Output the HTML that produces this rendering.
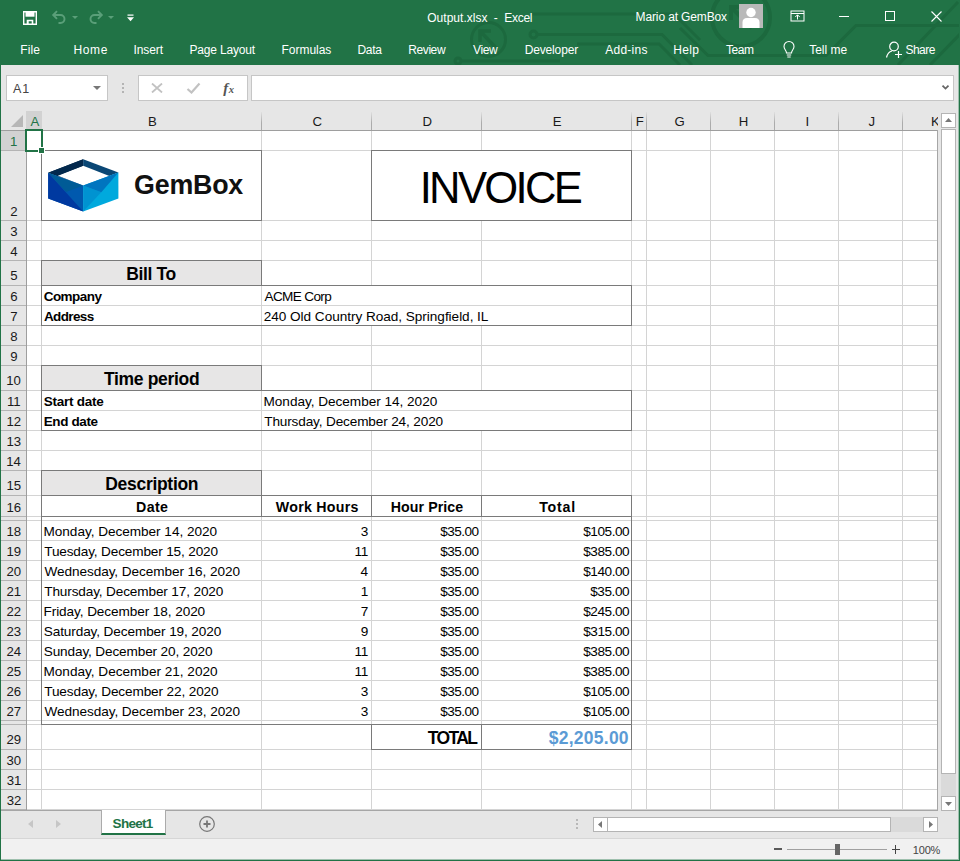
<!DOCTYPE html>
<html><head><meta charset="utf-8"><title>Output.xlsx - Excel</title>
<style>
html,body{margin:0;padding:0}
body{width:960px;height:861px;position:relative;overflow:hidden;background:#e6e6e6;font-family:"Liberation Sans", sans-serif;color:#000}
div,span,svg{position:absolute;box-sizing:border-box}
.t{white-space:nowrap;line-height:1}
.hl{background:#d4d4d4;height:1px}
.vl{background:#d4d4d4;width:1px}
</style></head><body>

<div style="left:0px;top:0px;width:960px;height:65px;background:#217346;"></div>
<svg style="left:0;top:0" width="960" height="65" viewBox="0 0 960 65" fill="none" stroke="#1c693e" stroke-width="3">
<circle cx="488.5" cy="39.5" r="17"/><path d="M497 49 L480 31 M480 42 V31 H491" stroke-width="3.5"/>
<circle cx="533.5" cy="34.5" r="3.5"/><path d="M537 34.5 H662 L692 65"/>
<circle cx="458" cy="61" r="3"/><path d="M461 61 H560"/>
<path d="M532 14 H674 L700 40"/>
<path d="M577 44 H659 L680 65"/>
<circle cx="741" cy="17.5" r="29" stroke-width="4"/><path d="M752 28 L731 7 M731 20 V7 H744" stroke-width="4"/>
<path d="M680 28 L708 55.5 H826 L856 25.5 H960"/>
<path d="M898 65 L958 2"/>
<path d="M930 65 L960 34"/>
</svg>
<svg style="left:22px;top:10px" width="16" height="16" viewBox="0 0 16 16"><path d="M1.7 1.7 H14.3 V14.3 H1.7 Z" fill="none" stroke="#fff" stroke-width="1.4"/><rect x="3.5" y="1.5" width="9" height="5.2" fill="#fff"/><path d="M4.7 9.7 H11.3 V15 H9.7 V11.3 H6.7 V15 H4.7 Z" fill="#fff"/></svg>
<svg style="left:51px;top:10px" width="17" height="15" viewBox="0 0 17 15" fill="none" stroke="#5a9f79" stroke-width="1.9"><path d="M2 5 H9.5 A4 4 0 0 1 9.5 13 H7.500"/><path d="M6 1.200 L2.200 5 L6 8.800"/></svg>
<svg style="left:72px;top:16px" width="6" height="3" viewBox="0 0 6 3"><path d="M0 0 H6 L3 3 Z" fill="#5a9f79"/></svg>
<svg style="left:87px;top:10px" width="17" height="15" viewBox="0 0 17 15" fill="none" stroke="#5a9f79" stroke-width="1.9"><path d="M15 5 H7.500 A4 4 0 0 0 7.500 13 H9.500"/><path d="M11 1.200 L14.800 5 L11 8.800"/></svg>
<svg style="left:108px;top:16px" width="6" height="3" viewBox="0 0 6 3"><path d="M0 0 H6 L3 3 Z" fill="#5a9f79"/></svg>
<svg style="left:127px;top:14px" width="7" height="8" viewBox="0 0 7 8"><rect x="0.500" y="0.500" width="6" height="1.200" fill="#fff"/><path d="M0 3.300 H7 L3.500 7.300 Z" fill="#fff"/></svg>
<span class="t" style="left:427.20px;top:11.70px;font-size:12px;letter-spacing:0.035px;color:#fff;">Output.xlsx</span>
<span class="t" style="left:493.80px;top:11.70px;font-size:12px;color:#fff;">-</span>
<span class="t" style="left:504.30px;top:11.70px;font-size:12px;letter-spacing:-0.275px;color:#fff;">Excel</span>
<span class="t" style="left:635.60px;top:11.00px;font-size:12px;letter-spacing:-0.132px;color:#fff;">Mario at GemBox</span>
<svg style="left:739px;top:4px" width="24" height="24" viewBox="0 0 24 24"><rect width="24" height="24" fill="#b9b9b9"/><circle cx="12" cy="8.500" r="4.700" fill="#fff"/><path d="M3.500 24 V18.500 Q3.500 14 8 14 H16 Q20.500 14 20.500 18.500 V24 Z" fill="#fff"/></svg>
<svg style="left:790px;top:10px" width="15" height="12" viewBox="0 0 15 12" fill="none" stroke="#fff" stroke-width="1"><rect x="1" y="1" width="13" height="10"/><path d="M1 3.500 H14" /><path d="M7.500 9.500 V5 M5.300 7 L7.500 4.800 L9.700 7"/></svg>
<div style="left:839px;top:16px;width:10px;height:1px;background:#fff;"></div>
<div style="left:885px;top:11px;width:10px;height:10px;border:1px solid #fff"></div>
<svg style="left:931px;top:11px" width="11" height="11" viewBox="0 0 11 11" stroke="#fff" stroke-width="1.100"><path d="M0.500 0.500 L10.500 10.500 M10.500 0.500 L0.500 10.500"/></svg>
<span class="t" style="left:20.30px;top:43.70px;font-size:12px;letter-spacing:0.067px;color:#fff;">File</span>
<span class="t" style="left:73.50px;top:43.70px;font-size:12px;letter-spacing:0.600px;color:#fff;">Home</span>
<span class="t" style="left:133.50px;top:43.70px;font-size:12px;letter-spacing:-0.100px;color:#fff;">Insert</span>
<span class="t" style="left:189.50px;top:43.70px;font-size:12px;letter-spacing:-0.175px;color:#fff;">Page Layout</span>
<span class="t" style="left:281.50px;top:43.70px;font-size:12px;letter-spacing:-0.029px;color:#fff;">Formulas</span>
<span class="t" style="left:357.50px;top:43.70px;font-size:12px;letter-spacing:-0.333px;color:#fff;">Data</span>
<span class="t" style="left:408.30px;top:43.70px;font-size:12px;letter-spacing:-0.420px;color:#fff;">Review</span>
<span class="t" style="left:473.00px;top:43.70px;font-size:12px;letter-spacing:-0.350px;color:#fff;">View</span>
<span class="t" style="left:524.70px;top:43.70px;font-size:12px;letter-spacing:-0.150px;color:#fff;">Developer</span>
<span class="t" style="left:605.30px;top:43.70px;font-size:12px;letter-spacing:0.242px;color:#fff;">Add-ins</span>
<span class="t" style="left:673.20px;top:43.70px;font-size:12px;letter-spacing:0.383px;color:#fff;">Help</span>
<span class="t" style="left:725.95px;top:43.70px;font-size:12px;letter-spacing:-0.400px;color:#fff;">Team</span>
<span class="t" style="left:809.15px;top:43.70px;font-size:12px;letter-spacing:-0.008px;color:#fff;">Tell me</span>
<span class="t" style="left:905.50px;top:43.70px;font-size:12px;letter-spacing:-0.550px;color:#fff;">Share</span>
<svg style="left:782px;top:40px" width="14" height="19" viewBox="0 0 14 19" fill="none" stroke="#fff" stroke-width="1.100"><path d="M4.500 13 C4.500 10.500 2 9.500 2 6.500 A5 5 0 0 1 12 6.500 C12 9.500 9.500 10.500 9.500 13 Z"/><path d="M4.800 15 H9.200 M5.300 17 H8.700"/></svg>
<svg style="left:885px;top:40px" width="19" height="19" viewBox="0 0 19 19" fill="none" stroke="#fff" stroke-width="1.200"><circle cx="9" cy="6.500" r="4.300"/><path d="M1.500 17.500 C2.500 13 5 11.500 7 11"/><path d="M10 14.500 H17 M13.500 11 V18"/></svg>
<div style="left:6px;top:75px;width:102px;height:26px;background:#fff;border:1px solid #c6c6c6"></div>
<span class="t" style="left:13.10px;top:82.70px;font-size:12.5px;letter-spacing:0.750px;color:#444;">A1</span>
<svg style="left:93px;top:86px" width="8" height="4" viewBox="0 0 8 4"><path d="M0 0 H8 L4 4 Z" fill="#777"/></svg>
<div style="left:122px;top:83px;width:2px;height:2px;background:#b4b4b4;"></div>
<div style="left:122px;top:87px;width:2px;height:2px;background:#b4b4b4;"></div>
<div style="left:122px;top:91px;width:2px;height:2px;background:#b4b4b4;"></div>
<div style="left:138px;top:75px;width:110px;height:26px;background:#fff;border:1px solid #c6c6c6"></div>
<svg style="left:151px;top:83px" width="12" height="10" viewBox="0 0 12 10" stroke="#c2c2c2" stroke-width="1.800"><path d="M1 0.500 L11 9.500 M11 0.500 L1 9.500"/></svg>
<svg style="left:186px;top:82px" width="15" height="12" viewBox="0 0 15 12" stroke="#c2c2c2" stroke-width="2.200" fill="none"><path d="M1.500 7 L5.500 10.500 L13.500 1.500"/></svg>
<span class="t" style="left:223.30px;top:80.50px;font-size:15px;font-weight:bold;font-style:italic;color:#555;font-family:'Liberation Serif', serif;">f</span>
<span class="t" style="left:228.75px;top:85.00px;font-size:10.5px;font-weight:bold;font-style:italic;color:#555;font-family:'Liberation Serif', serif;">x</span>
<div style="left:251px;top:75px;width:703px;height:26px;background:#fff;border:1px solid #c6c6c6"></div>
<svg style="left:941px;top:84px" width="9" height="7" viewBox="0 0 9 7" fill="none" stroke="#666" stroke-width="1.800"><path d="M1.500 1.600 L4.500 4.600 L7.500 1.600"/></svg>
<div style="left:27px;top:131px;width:910px;height:679px;background:#fff;"></div>
<div style="left:26px;top:111px;width:16px;height:19px;background:#d2d2d2;"></div>
<svg style="left:11px;top:115px" width="12" height="12" viewBox="0 0 12 12"><path d="M12 0 V12 H0 Z" fill="#b7b7b7"/></svg>
<span class="t" style="left:30.52px;top:115.00px;font-size:13.2px;color:#217346;">A</span>
<span class="t" style="left:147.90px;top:115.00px;font-size:13.2px;color:#1a1a1a;">B</span>
<span class="t" style="left:312.52px;top:115.00px;font-size:13.2px;color:#1a1a1a;">C</span>
<span class="t" style="left:422.40px;top:115.00px;font-size:13.2px;color:#1a1a1a;">D</span>
<span class="t" style="left:552.77px;top:115.00px;font-size:13.2px;color:#1a1a1a;">E</span>
<span class="t" style="left:635.65px;top:115.00px;font-size:13.2px;color:#1a1a1a;">F</span>
<span class="t" style="left:674.40px;top:115.00px;font-size:13.2px;color:#1a1a1a;">G</span>
<span class="t" style="left:738.65px;top:115.00px;font-size:13.2px;color:#1a1a1a;">H</span>
<span class="t" style="left:805.52px;top:115.00px;font-size:13.2px;color:#1a1a1a;">I</span>
<span class="t" style="left:868.40px;top:115.00px;font-size:13.2px;color:#1a1a1a;">J</span>
<span class="t" style="left:930.90px;top:115.00px;font-size:13.2px;color:#1a1a1a;">K</span>
<div style="left:261px;top:112px;width:1px;height:18px;background:linear-gradient(#e0e0e0,#ababab 60%)"></div>
<div style="left:371px;top:112px;width:1px;height:18px;background:linear-gradient(#e0e0e0,#ababab 60%)"></div>
<div style="left:481px;top:112px;width:1px;height:18px;background:linear-gradient(#e0e0e0,#ababab 60%)"></div>
<div style="left:631px;top:112px;width:1px;height:18px;background:linear-gradient(#e0e0e0,#ababab 60%)"></div>
<div style="left:646px;top:112px;width:1px;height:18px;background:linear-gradient(#e0e0e0,#ababab 60%)"></div>
<div style="left:710px;top:112px;width:1px;height:18px;background:linear-gradient(#e0e0e0,#ababab 60%)"></div>
<div style="left:774px;top:112px;width:1px;height:18px;background:linear-gradient(#e0e0e0,#ababab 60%)"></div>
<div style="left:838px;top:112px;width:1px;height:18px;background:linear-gradient(#e0e0e0,#ababab 60%)"></div>
<div style="left:902px;top:112px;width:1px;height:18px;background:linear-gradient(#e0e0e0,#ababab 60%)"></div>
<div style="left:1px;top:130px;width:937px;height:1px;background:#9e9e9e;"></div>
<div style="left:1px;top:131px;width:25px;height:19px;background:#d2d2d2;"></div>
<div style="left:26px;top:131px;width:1px;height:679px;background:#9e9e9e;"></div>
<div style="left:1px;top:150px;width:25px;height:1px;background:#b4b4b4;"></div>
<span class="t" style="left:10.03px;top:134.60px;font-size:13.2px;color:#217346;">1</span>
<div style="left:1px;top:220px;width:25px;height:1px;background:#b4b4b4;"></div>
<span class="t" style="left:10.15px;top:204.60px;font-size:13.2px;color:#1a1a1a;">2</span>
<div style="left:1px;top:240px;width:25px;height:1px;background:#b4b4b4;"></div>
<span class="t" style="left:10.28px;top:224.60px;font-size:13.2px;color:#1a1a1a;">3</span>
<div style="left:1px;top:260px;width:25px;height:1px;background:#b4b4b4;"></div>
<span class="t" style="left:10.28px;top:244.60px;font-size:13.2px;color:#1a1a1a;">4</span>
<div style="left:1px;top:285px;width:25px;height:1px;background:#b4b4b4;"></div>
<span class="t" style="left:10.28px;top:268.70px;font-size:13.2px;color:#1a1a1a;">5</span>
<div style="left:1px;top:305px;width:25px;height:1px;background:#b4b4b4;"></div>
<span class="t" style="left:10.15px;top:289.60px;font-size:13.2px;color:#1a1a1a;">6</span>
<div style="left:1px;top:325px;width:25px;height:1px;background:#b4b4b4;"></div>
<span class="t" style="left:10.15px;top:309.60px;font-size:13.2px;color:#1a1a1a;">7</span>
<div style="left:1px;top:345px;width:25px;height:1px;background:#b4b4b4;"></div>
<span class="t" style="left:10.28px;top:329.60px;font-size:13.2px;color:#1a1a1a;">8</span>
<div style="left:1px;top:365px;width:25px;height:1px;background:#b4b4b4;"></div>
<span class="t" style="left:10.28px;top:349.60px;font-size:13.2px;color:#1a1a1a;">9</span>
<div style="left:1px;top:390px;width:25px;height:1px;background:#b4b4b4;"></div>
<span class="t" style="left:6.28px;top:373.70px;font-size:13.2px;color:#1a1a1a;">10</span>
<div style="left:1px;top:410px;width:25px;height:1px;background:#b4b4b4;"></div>
<span class="t" style="left:6.90px;top:394.60px;font-size:13.2px;color:#1a1a1a;">11</span>
<div style="left:1px;top:430px;width:25px;height:1px;background:#b4b4b4;"></div>
<span class="t" style="left:6.40px;top:414.60px;font-size:13.2px;color:#1a1a1a;">12</span>
<div style="left:1px;top:450px;width:25px;height:1px;background:#b4b4b4;"></div>
<span class="t" style="left:6.40px;top:434.60px;font-size:13.2px;color:#1a1a1a;">13</span>
<div style="left:1px;top:470px;width:25px;height:1px;background:#b4b4b4;"></div>
<span class="t" style="left:6.28px;top:454.60px;font-size:13.2px;color:#1a1a1a;">14</span>
<div style="left:1px;top:495px;width:25px;height:1px;background:#b4b4b4;"></div>
<span class="t" style="left:6.40px;top:478.70px;font-size:13.2px;color:#1a1a1a;">15</span>
<div style="left:1px;top:516px;width:25px;height:1px;background:#b4b4b4;"></div>
<span class="t" style="left:6.40px;top:500.60px;font-size:13.2px;color:#1a1a1a;">16</span>
<div style="left:1px;top:520px;width:25px;height:1px;background:#b4b4b4;"></div>
<div style="left:1px;top:540px;width:25px;height:1px;background:#b4b4b4;"></div>
<span class="t" style="left:6.40px;top:524.60px;font-size:13.2px;color:#1a1a1a;">18</span>
<div style="left:1px;top:560px;width:25px;height:1px;background:#b4b4b4;"></div>
<span class="t" style="left:6.40px;top:544.60px;font-size:13.2px;color:#1a1a1a;">19</span>
<div style="left:1px;top:580px;width:25px;height:1px;background:#b4b4b4;"></div>
<span class="t" style="left:6.40px;top:564.60px;font-size:13.2px;color:#1a1a1a;">20</span>
<div style="left:1px;top:600px;width:25px;height:1px;background:#b4b4b4;"></div>
<span class="t" style="left:6.53px;top:584.60px;font-size:13.2px;color:#1a1a1a;">21</span>
<div style="left:1px;top:620px;width:25px;height:1px;background:#b4b4b4;"></div>
<span class="t" style="left:6.53px;top:604.60px;font-size:13.2px;color:#1a1a1a;">22</span>
<div style="left:1px;top:640px;width:25px;height:1px;background:#b4b4b4;"></div>
<span class="t" style="left:6.53px;top:624.60px;font-size:13.2px;color:#1a1a1a;">23</span>
<div style="left:1px;top:660px;width:25px;height:1px;background:#b4b4b4;"></div>
<span class="t" style="left:6.40px;top:644.60px;font-size:13.2px;color:#1a1a1a;">24</span>
<div style="left:1px;top:680px;width:25px;height:1px;background:#b4b4b4;"></div>
<span class="t" style="left:6.53px;top:664.60px;font-size:13.2px;color:#1a1a1a;">25</span>
<div style="left:1px;top:700px;width:25px;height:1px;background:#b4b4b4;"></div>
<span class="t" style="left:6.53px;top:684.60px;font-size:13.2px;color:#1a1a1a;">26</span>
<div style="left:1px;top:720px;width:25px;height:1px;background:#b4b4b4;"></div>
<span class="t" style="left:6.53px;top:704.60px;font-size:13.2px;color:#1a1a1a;">27</span>
<div style="left:1px;top:724px;width:25px;height:1px;background:#b4b4b4;"></div>
<div style="left:1px;top:749px;width:25px;height:1px;background:#b4b4b4;"></div>
<span class="t" style="left:6.53px;top:732.70px;font-size:13.2px;color:#1a1a1a;">29</span>
<div style="left:1px;top:769px;width:25px;height:1px;background:#b4b4b4;"></div>
<span class="t" style="left:6.53px;top:753.60px;font-size:13.2px;color:#1a1a1a;">30</span>
<div style="left:1px;top:789px;width:25px;height:1px;background:#b4b4b4;"></div>
<span class="t" style="left:6.65px;top:773.60px;font-size:13.2px;color:#1a1a1a;">31</span>
<div style="left:1px;top:809px;width:25px;height:1px;background:#b4b4b4;"></div>
<span class="t" style="left:6.65px;top:793.60px;font-size:13.2px;color:#1a1a1a;">32</span>
<div class="hl" style="left:27px;top:150px;width:910px"></div>
<div class="hl" style="left:27px;top:220px;width:910px"></div>
<div class="hl" style="left:27px;top:240px;width:910px"></div>
<div class="hl" style="left:27px;top:260px;width:910px"></div>
<div class="hl" style="left:27px;top:285px;width:910px"></div>
<div class="hl" style="left:27px;top:305px;width:910px"></div>
<div class="hl" style="left:27px;top:325px;width:910px"></div>
<div class="hl" style="left:27px;top:345px;width:910px"></div>
<div class="hl" style="left:27px;top:365px;width:910px"></div>
<div class="hl" style="left:27px;top:390px;width:910px"></div>
<div class="hl" style="left:27px;top:410px;width:910px"></div>
<div class="hl" style="left:27px;top:430px;width:910px"></div>
<div class="hl" style="left:27px;top:450px;width:910px"></div>
<div class="hl" style="left:27px;top:470px;width:910px"></div>
<div class="hl" style="left:27px;top:495px;width:910px"></div>
<div class="hl" style="left:27px;top:516px;width:910px"></div>
<div class="hl" style="left:27px;top:520px;width:910px"></div>
<div class="hl" style="left:27px;top:540px;width:910px"></div>
<div class="hl" style="left:27px;top:560px;width:910px"></div>
<div class="hl" style="left:27px;top:580px;width:910px"></div>
<div class="hl" style="left:27px;top:600px;width:910px"></div>
<div class="hl" style="left:27px;top:620px;width:910px"></div>
<div class="hl" style="left:27px;top:640px;width:910px"></div>
<div class="hl" style="left:27px;top:660px;width:910px"></div>
<div class="hl" style="left:27px;top:680px;width:910px"></div>
<div class="hl" style="left:27px;top:700px;width:910px"></div>
<div class="hl" style="left:27px;top:720px;width:910px"></div>
<div class="hl" style="left:27px;top:724px;width:910px"></div>
<div class="hl" style="left:27px;top:749px;width:910px"></div>
<div class="hl" style="left:27px;top:769px;width:910px"></div>
<div class="hl" style="left:27px;top:789px;width:910px"></div>
<div class="hl" style="left:27px;top:809px;width:910px"></div>
<div class="vl" style="left:41px;top:131px;height:679px"></div>
<div class="vl" style="left:261px;top:131px;height:679px"></div>
<div class="vl" style="left:371px;top:131px;height:679px"></div>
<div class="vl" style="left:481px;top:131px;height:679px"></div>
<div class="vl" style="left:631px;top:131px;height:679px"></div>
<div class="vl" style="left:646px;top:131px;height:679px"></div>
<div class="vl" style="left:710px;top:131px;height:679px"></div>
<div class="vl" style="left:774px;top:131px;height:679px"></div>
<div class="vl" style="left:838px;top:131px;height:679px"></div>
<div class="vl" style="left:902px;top:131px;height:679px"></div>
<div style="left:937px;top:130px;width:1px;height:681px;background:#a6a6a6;"></div>
<div style="left:1px;top:810px;width:937px;height:1px;background:#a6a6a6;"></div>
<div style="left:938px;top:111px;width:3px;height:20px;background:#e6e6e6;"></div>
<div style="left:41px;top:150px;width:221px;height:71px;border:1px solid #7a7a7a;background:#fff;"></div>
<div style="left:371px;top:150px;width:261px;height:71px;border:1px solid #7a7a7a;background:#fff;"></div>
<div style="left:41px;top:260px;width:221px;height:26px;border:1px solid #7a7a7a;background:#e7e6e6;"></div>
<div style="left:262px;top:286px;width:369px;height:19px;background:#fff;"></div>
<div style="left:262px;top:306px;width:369px;height:19px;background:#fff;"></div>
<div style="left:41px;top:285px;width:591px;height:41px;border:1px solid #7a7a7a;"></div>
<div style="left:41px;top:365px;width:221px;height:26px;border:1px solid #7a7a7a;background:#e7e6e6;"></div>
<div style="left:262px;top:391px;width:369px;height:19px;background:#fff;"></div>
<div style="left:262px;top:411px;width:369px;height:19px;background:#fff;"></div>
<div style="left:41px;top:390px;width:591px;height:41px;border:1px solid #7a7a7a;"></div>
<div style="left:41px;top:470px;width:221px;height:26px;border:1px solid #7a7a7a;background:#e7e6e6;"></div>
<div style="left:41px;top:495px;width:221px;height:22px;border:1px solid #7a7a7a;"></div>
<div style="left:261px;top:495px;width:111px;height:22px;border:1px solid #7a7a7a;"></div>
<div style="left:371px;top:495px;width:111px;height:22px;border:1px solid #7a7a7a;"></div>
<div style="left:481px;top:495px;width:151px;height:22px;border:1px solid #7a7a7a;"></div>
<div style="left:41px;top:516px;width:1px;height:209px;background:#7a7a7a;"></div>
<div style="left:631px;top:516px;width:1px;height:209px;background:#7a7a7a;"></div>
<div style="left:41px;top:724px;width:591px;height:1px;background:#7a7a7a;"></div>
<div style="left:371px;top:724px;width:111px;height:26px;border:1px solid #7a7a7a;"></div>
<div style="left:481px;top:724px;width:151px;height:26px;border:1px solid #7a7a7a;"></div>
<div style="left:25px;top:129px;width:18px;height:23px;border:2px solid #217346"></div>
<div style="left:38px;top:147px;width:7px;height:7px;background:#217346;border:1px solid #fff"></div>
<span class="t" style="left:419.70px;top:167.40px;font-size:43.6px;letter-spacing:-2.700px;">INVOICE</span>
<span class="t" style="left:126.25px;top:266.00px;font-size:17.5px;letter-spacing:-0.375px;font-weight:bold;">Bill To</span>
<span class="t" style="left:43.70px;top:290.00px;font-size:13.5px;letter-spacing:-0.542px;font-weight:bold;">Company</span>
<span class="t" style="left:264.50px;top:290.00px;font-size:13.6px;letter-spacing:-0.663px;">ACME Corp</span>
<span class="t" style="left:43.95px;top:310.00px;font-size:13.5px;letter-spacing:-0.625px;font-weight:bold;">Address</span>
<span class="t" style="left:263.75px;top:310.00px;font-size:13.6px;letter-spacing:-0.035px;">240 Old Country Road, Springfield, IL</span>
<span class="t" style="left:103.95px;top:371.00px;font-size:17.5px;letter-spacing:-0.320px;font-weight:bold;">Time period</span>
<span class="t" style="left:43.70px;top:395.00px;font-size:13.5px;letter-spacing:-0.250px;font-weight:bold;">Start date</span>
<span class="t" style="left:263.50px;top:395.00px;font-size:13.6px;letter-spacing:-0.023px;">Monday, December 14, 2020</span>
<span class="t" style="left:43.75px;top:415.00px;font-size:13.5px;letter-spacing:-0.393px;font-weight:bold;">End date</span>
<span class="t" style="left:264.25px;top:415.00px;font-size:13.6px;letter-spacing:-0.144px;">Thursday, December 24, 2020</span>
<span class="t" style="left:105.25px;top:476.00px;font-size:17.5px;letter-spacing:-0.300px;font-weight:bold;">Description</span>
<span class="t" style="left:136.00px;top:500.20px;font-size:14.2px;letter-spacing:0.417px;font-weight:bold;">Date</span>
<span class="t" style="left:275.80px;top:500.20px;font-size:14.2px;letter-spacing:0.278px;font-weight:bold;">Work Hours</span>
<span class="t" style="left:390.80px;top:500.20px;font-size:14.2px;letter-spacing:0.072px;font-weight:bold;">Hour Price</span>
<span class="t" style="left:539.25px;top:500.20px;font-size:14.2px;letter-spacing:0.750px;font-weight:bold;">Total</span>
<span class="t" style="left:43.50px;top:525.00px;font-size:13.6px;letter-spacing:-0.031px;">Monday, December 14, 2020</span>
<span class="t" style="left:360.80px;top:525.00px;font-size:13.6px;letter-spacing:-0.300px;">3</span>
<span class="t" style="left:440.25px;top:525.00px;font-size:13.6px;letter-spacing:-0.550px;">$35.00</span>
<span class="t" style="left:583.20px;top:525.00px;font-size:13.6px;letter-spacing:-0.450px;">$105.00</span>
<span class="t" style="left:44.25px;top:545.00px;font-size:13.6px;letter-spacing:-0.150px;">Tuesday, December 15, 2020</span>
<span class="t" style="left:354.60px;top:545.00px;font-size:13.6px;letter-spacing:-0.300px;">11</span>
<span class="t" style="left:440.25px;top:545.00px;font-size:13.6px;letter-spacing:-0.550px;">$35.00</span>
<span class="t" style="left:583.20px;top:545.00px;font-size:13.6px;letter-spacing:-0.450px;">$385.00</span>
<span class="t" style="left:44.50px;top:565.00px;font-size:13.6px;letter-spacing:-0.074px;">Wednesday, December 16, 2020</span>
<span class="t" style="left:360.55px;top:565.00px;font-size:13.6px;letter-spacing:-0.300px;">4</span>
<span class="t" style="left:440.25px;top:565.00px;font-size:13.6px;letter-spacing:-0.550px;">$35.00</span>
<span class="t" style="left:583.20px;top:565.00px;font-size:13.6px;letter-spacing:-0.450px;">$140.00</span>
<span class="t" style="left:44.25px;top:585.00px;font-size:13.6px;letter-spacing:-0.137px;">Thursday, December 17, 2020</span>
<span class="t" style="left:360.80px;top:585.00px;font-size:13.6px;letter-spacing:-0.300px;">1</span>
<span class="t" style="left:440.25px;top:585.00px;font-size:13.6px;letter-spacing:-0.550px;">$35.00</span>
<span class="t" style="left:590.25px;top:585.00px;font-size:13.6px;letter-spacing:-0.450px;">$35.00</span>
<span class="t" style="left:43.50px;top:605.00px;font-size:13.6px;letter-spacing:-0.085px;">Friday, December 18, 2020</span>
<span class="t" style="left:360.80px;top:605.00px;font-size:13.6px;letter-spacing:-0.300px;">7</span>
<span class="t" style="left:440.25px;top:605.00px;font-size:13.6px;letter-spacing:-0.550px;">$35.00</span>
<span class="t" style="left:583.20px;top:605.00px;font-size:13.6px;letter-spacing:-0.450px;">$245.00</span>
<span class="t" style="left:43.75px;top:625.00px;font-size:13.6px;letter-spacing:-0.108px;">Saturday, December 19, 2020</span>
<span class="t" style="left:360.80px;top:625.00px;font-size:13.6px;letter-spacing:-0.300px;">9</span>
<span class="t" style="left:440.25px;top:625.00px;font-size:13.6px;letter-spacing:-0.550px;">$35.00</span>
<span class="t" style="left:583.20px;top:625.00px;font-size:13.6px;letter-spacing:-0.450px;">$315.00</span>
<span class="t" style="left:43.75px;top:645.00px;font-size:13.6px;letter-spacing:-0.135px;">Sunday, December 20, 2020</span>
<span class="t" style="left:354.60px;top:645.00px;font-size:13.6px;letter-spacing:-0.300px;">11</span>
<span class="t" style="left:440.25px;top:645.00px;font-size:13.6px;letter-spacing:-0.550px;">$35.00</span>
<span class="t" style="left:583.20px;top:645.00px;font-size:13.6px;letter-spacing:-0.450px;">$385.00</span>
<span class="t" style="left:43.50px;top:665.00px;font-size:13.6px;letter-spacing:-0.010px;">Monday, December 21, 2020</span>
<span class="t" style="left:354.60px;top:665.00px;font-size:13.6px;letter-spacing:-0.300px;">11</span>
<span class="t" style="left:440.25px;top:665.00px;font-size:13.6px;letter-spacing:-0.550px;">$35.00</span>
<span class="t" style="left:583.20px;top:665.00px;font-size:13.6px;letter-spacing:-0.450px;">$385.00</span>
<span class="t" style="left:44.25px;top:685.00px;font-size:13.6px;letter-spacing:-0.130px;">Tuesday, December 22, 2020</span>
<span class="t" style="left:360.80px;top:685.00px;font-size:13.6px;letter-spacing:-0.300px;">3</span>
<span class="t" style="left:440.25px;top:685.00px;font-size:13.6px;letter-spacing:-0.550px;">$35.00</span>
<span class="t" style="left:583.20px;top:685.00px;font-size:13.6px;letter-spacing:-0.450px;">$105.00</span>
<span class="t" style="left:44.50px;top:705.00px;font-size:13.6px;letter-spacing:-0.067px;">Wednesday, December 23, 2020</span>
<span class="t" style="left:360.80px;top:705.00px;font-size:13.6px;letter-spacing:-0.300px;">3</span>
<span class="t" style="left:440.25px;top:705.00px;font-size:13.6px;letter-spacing:-0.550px;">$35.00</span>
<span class="t" style="left:583.20px;top:705.00px;font-size:13.6px;letter-spacing:-0.450px;">$105.00</span>
<span class="t" style="left:427.75px;top:730.00px;font-size:17.5px;letter-spacing:-1.625px;font-weight:bold;">TOTAL</span>
<span class="t" style="left:548.75px;top:730.00px;font-size:17.5px;letter-spacing:0.250px;font-weight:bold;color:#5b9bd5;">$2,205.00</span>
<svg style="left:44px;top:154px" width="80" height="64" viewBox="0 0 80 64">
<polygon points="4.170,18.750 39.170,5.170 39.170,11.830 13.330,21.500 39.170,31.500 4.170,18.750" fill="#03294d"/>
<polygon points="4.170,18.750 39.170,5.170 39.170,11.830 13.330,21.900" fill="#03294d"/>
<polygon points="39.170,5.170 74.400,18.500 65.400,21.900 39.170,11.830" fill="#0a4775"/>
<polygon points="4.170,18.750 39.170,31.500 39.170,57.500 4.170,44.600" fill="#0059ae"/>
<polygon points="4.170,18.750 39.170,57.500 4.170,44.600" fill="#0039a0"/>
<polygon points="4.170,18.750 39.170,31.500 22.100,37.900" fill="#005b96"/>
<polygon points="39.170,31.500 74.400,18.500 74.400,44.600 39.170,57.500" fill="#00a9dd"/>
<polygon points="39.170,31.500 57.300,38.200 39.170,57.500" fill="#0093d1"/>
<polygon points="39.170,31.500 74.400,18.500 57.300,38.200" fill="#0075bf"/>
</svg>
<span class="t" style="left:134.10px;top:172.20px;font-size:26.8px;letter-spacing:-0.220px;font-weight:bold;color:#111;">GemBox</span>
<div style="left:941px;top:113px;width:15px;height:698px;background:#dadada;"></div>
<div style="left:941px;top:113px;width:15px;height:15px;background:#fff;border:1px solid #b4b4b4"></div>
<svg style="left:945px;top:118px" width="7" height="4" viewBox="0 0 7 4"><path d="M0 4 H7 L3.500 0 Z" fill="#777"/></svg>
<div style="left:941px;top:128px;width:15px;height:1px;background:#e6e6e6;"></div>
<div style="left:941px;top:129px;width:15px;height:645px;background:#fff;border:1px solid #b4b4b4"></div>
<div style="left:941px;top:796px;width:15px;height:15px;background:#fff;border:1px solid #b4b4b4"></div>
<svg style="left:945px;top:802px" width="7" height="4" viewBox="0 0 7 4"><path d="M0 0 H7 L3.500 4 Z" fill="#777"/></svg>
<svg style="left:28px;top:820px" width="5" height="8" viewBox="0 0 5 8"><path d="M5 0 V8 L0 4 Z" fill="#c6c6c6"/></svg>
<svg style="left:56px;top:820px" width="5" height="8" viewBox="0 0 5 8"><path d="M0 0 V8 L5 4 Z" fill="#c6c6c6"/></svg>
<div style="left:101px;top:810px;width:65px;height:25px;background:#fff;border-bottom:2px solid #217346;border-left:1px solid #ababab;border-right:1px solid #ababab"></div>
<span class="t" style="left:112.60px;top:816.80px;font-size:13.5px;letter-spacing:-0.700px;font-weight:bold;color:#217346;">Sheet1</span>
<svg style="left:198px;top:815px" width="17" height="17" viewBox="0 0 17 17" fill="none" stroke="#777"><circle cx="9" cy="9" r="7.300" stroke-width="1.200"/><path d="M9 5.500 V12.500 M5.500 9 H12.500" stroke-width="1.800"/></svg>
<div style="left:576px;top:819px;width:2px;height:2px;background:#b8b8b8;"></div>
<div style="left:576px;top:823px;width:2px;height:2px;background:#b8b8b8;"></div>
<div style="left:576px;top:827px;width:2px;height:2px;background:#b8b8b8;"></div>
<div style="left:593px;top:817px;width:345px;height:15px;background:#dadada;"></div>
<div style="left:593px;top:817px;width:15px;height:15px;background:#fff;border:1px solid #b4b4b4"></div>
<svg style="left:598px;top:821px" width="4" height="7" viewBox="0 0 4 7"><path d="M4 0 V7 L0 3.500 Z" fill="#777"/></svg>
<div style="left:607px;top:817px;width:284px;height:15px;background:#fff;border:1px solid #b4b4b4"></div>
<div style="left:923px;top:817px;width:15px;height:15px;background:#fff;border:1px solid #b4b4b4"></div>
<svg style="left:929px;top:821px" width="4" height="7" viewBox="0 0 4 7"><path d="M0 0 V7 L4 3.500 Z" fill="#777"/></svg>
<div style="left:1px;top:838px;width:958px;height:1px;background:#d6d6d6;"></div>
<div style="left:1px;top:839px;width:958px;height:21px;background:#f1f1f1;"></div>
<div style="left:774px;top:848px;width:8px;height:2px;background:#5a5a5a;"></div>
<div style="left:787px;top:849px;width:100px;height:1px;background:#a0a0a0;"></div>
<div style="left:835px;top:844px;width:5px;height:11px;background:#666;"></div>
<div style="left:892px;top:849px;width:8px;height:1px;background:#444;"></div>
<div style="left:895px;top:845px;width:1px;height:9px;background:#444;"></div>
<span class="t" style="left:912.85px;top:844.70px;font-size:11px;letter-spacing:-0.200px;color:#444;">100%</span>
<div style="left:958px;top:65px;width:1px;height:795px;background:#9fc0ae;"></div>
<div style="left:1px;top:859px;width:958px;height:1px;background:#9fc0ae;"></div>
<div style="left:0px;top:0px;width:1px;height:861px;background:#217346;"></div>
<div style="left:959px;top:0px;width:1px;height:861px;background:#217346;"></div>
<div style="left:0px;top:860px;width:960px;height:1px;background:#217346;"></div>
</body></html>
